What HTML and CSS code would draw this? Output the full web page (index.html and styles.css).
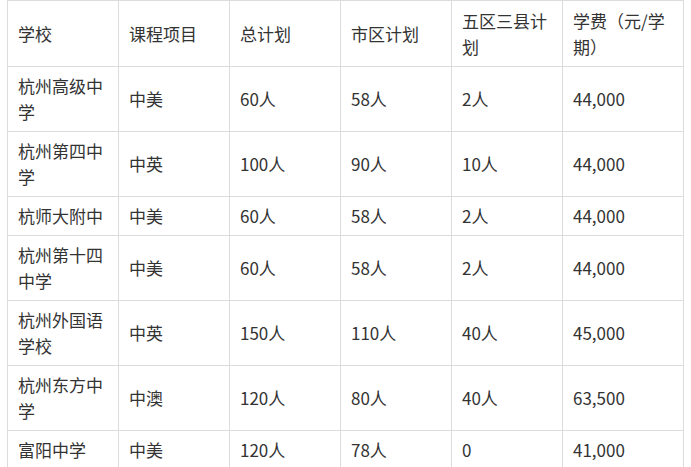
FILE: index.html
```html
<!DOCTYPE html>
<html lang="zh">
<head>
<meta charset="utf-8">
<link rel="stylesheet" href="styles.css">
</head>
<body>
<div class="wrap">
<table class="plan">
<colgroup>
<col class="c1"><col class="c2"><col class="c3"><col class="c4"><col class="c5"><col class="c6">
</colgroup>
<tr class="head"><td>学校</td><td>课程项目</td><td>总计划</td><td>市区计划</td><td>五区三县计划</td><td>学费（元/学期）</td></tr>
<tr><td>杭州高级中学</td><td>中美</td><td>60人</td><td>58人</td><td>2人</td><td>44,000</td></tr>
<tr><td>杭州第四中学</td><td>中英</td><td>100人</td><td>90人</td><td>10人</td><td>44,000</td></tr>
<tr><td>杭师大附中</td><td>中美</td><td>60人</td><td>58人</td><td>2人</td><td>44,000</td></tr>
<tr><td>杭州第十四中学</td><td>中美</td><td>60人</td><td>58人</td><td>2人</td><td>44,000</td></tr>
<tr><td>杭州外国语学校</td><td>中英</td><td>150人</td><td>110人</td><td>40人</td><td>45,000</td></tr>
<tr><td>杭州东方中学</td><td>中澳</td><td>120人</td><td>80人</td><td>40人</td><td>63,500</td></tr>
<tr><td>富阳中学</td><td>中美</td><td>120人</td><td>78人</td><td>0</td><td>41,000</td></tr>
</table>
</div>
</body>
</html>
```

FILE: styles.css
```css
html, body {
  margin: 0;
  padding: 0;
  background: #ffffff;
}
.wrap {
  padding-left: 7px;
}
.plan {
  border-collapse: collapse;
  table-layout: fixed;
  width: 677px;
  font-family: "Noto Sans CJK SC", "Noto Sans", sans-serif;
  font-size: 17px;
  line-height: 26px;
  color: #333333;
}
.c1, .c2, .c3, .c4, .c5 { width: 111px; }
.c6 { width: 121px; }
.plan td {
  border: 1px solid #dcdcdc;
  padding: 6px 10px;
  vertical-align: middle;
  word-break: break-all;
}
.head td {
  height: 53px;
}
```
